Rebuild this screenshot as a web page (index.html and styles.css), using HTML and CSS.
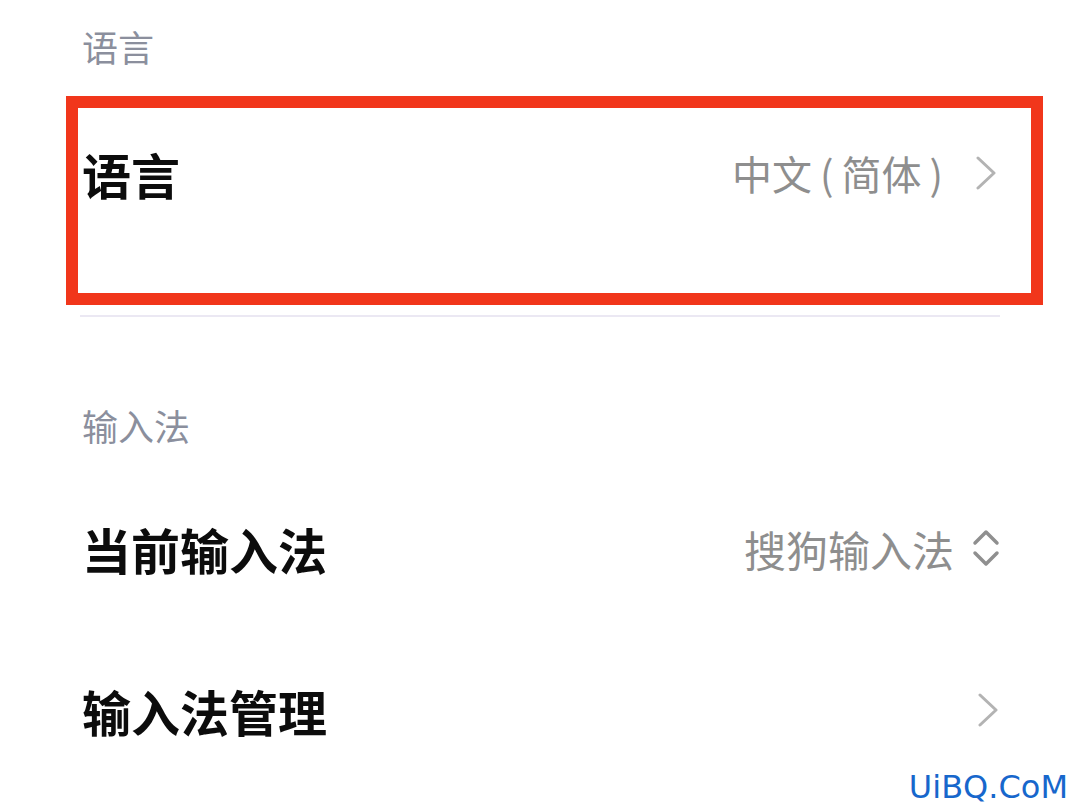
FILE: index.html
```html
<!DOCTYPE html>
<html lang="zh-CN">
<head>
    <meta charset="UTF-8">
    <meta name="viewport" content="width=device-width, initial-scale=1.0">
    <title>语言和输入法</title>
    <link rel="stylesheet" href="styles.css">
</head>
<body>

<div class="page">
    <div class="section-title first">语言</div>

    <div class="row highlight">
        <span class="row-label">语言</span>
        <span class="row-value">中文<span class="paren">(</span>简体<span class="paren">)</span></span>
        <svg class="chevron" width="22" height="34" viewBox="0 0 22 34">
            <path d="M3 2 L19 17 L3 32" fill="none" stroke="#b3b3b3" stroke-width="3" stroke-linecap="round" stroke-linejoin="round"/>
        </svg>
    </div>

    <div class="divider"></div>

    <div class="section-title">输入法</div>

    <div class="row">
        <span class="row-label">当前输入法</span>
        <span class="row-value wide">搜狗输入法</span>
        <svg class="updown" width="28" height="40" viewBox="0 0 28 40">
            <path d="M3 15 L14 4 L25 15" fill="none" stroke="#8f8f8f" stroke-width="3.5" stroke-linecap="round" stroke-linejoin="round"/>
            <path d="M3 25 L14 36 L25 25" fill="none" stroke="#8f8f8f" stroke-width="3.5" stroke-linecap="round" stroke-linejoin="round"/>
        </svg>
    </div>

    <div class="row">
        <span class="row-label">输入法管理</span>
        <svg class="chevron" width="22" height="34" viewBox="0 0 22 34">
            <path d="M3 2 L19 17 L3 32" fill="none" stroke="#b3b3b3" stroke-width="3" stroke-linecap="round" stroke-linejoin="round"/>
        </svg>
    </div>
</div>

<div class="watermark">UiBQ.CoM</div>

</body>
</html>
```

FILE: styles.css
```css
body {
    margin: 0;
    background-color: #ffffff;
    font-family: "Noto Sans CJK SC", "Noto Sans", sans-serif;
    color: #111111;
    width: 1080px;
    height: 810px;
    overflow: hidden;
    position: relative;
}

.page {
    padding: 0 80px 0 82px;
}

/* Заголовки секций */
.section-title {
    font-size: 36px;
    line-height: 36px;
    color: #8b8f9d;
    margin-top: 90px;
}

.section-title.first {
    margin-top: 28px;
    margin-bottom: 32px;
}

.row {
    display: flex;
    align-items: center;
    height: 162px;
}

.section-title + .row {
    margin-top: 24px;
}

.row-label {
    flex: 1;
    font-size: 49px;
    font-weight: 700;
    color: #0c0c0c;
}

.row-value {
    font-size: 40px;
    color: #8e8e8e;
}

.row-value.wide {
    font-size: 42px;
}

.paren {
    padding: 0 8px;
}

.chevron {
    margin-left: 24px;
    margin-right: 1px;
}

.updown {
    margin-left: 18px;
}

/* Красная рамка вокруг строки */
.row.highlight {
    box-sizing: border-box;
    height: 209px;
    border: 12px solid #f1361b;
    margin: 0 -43px 0 -16px;
    padding: 0 33px 55px 4px;
}

.divider {
    height: 2px;
    background-color: #ebe8f3;
    margin: 10px 0 0 -2px;
}

.watermark {
    position: absolute;
    right: 12px;
    bottom: 4px;
    font-family: "DejaVu Sans", sans-serif;
    font-size: 32px;
    color: #1767cc;
}
```
